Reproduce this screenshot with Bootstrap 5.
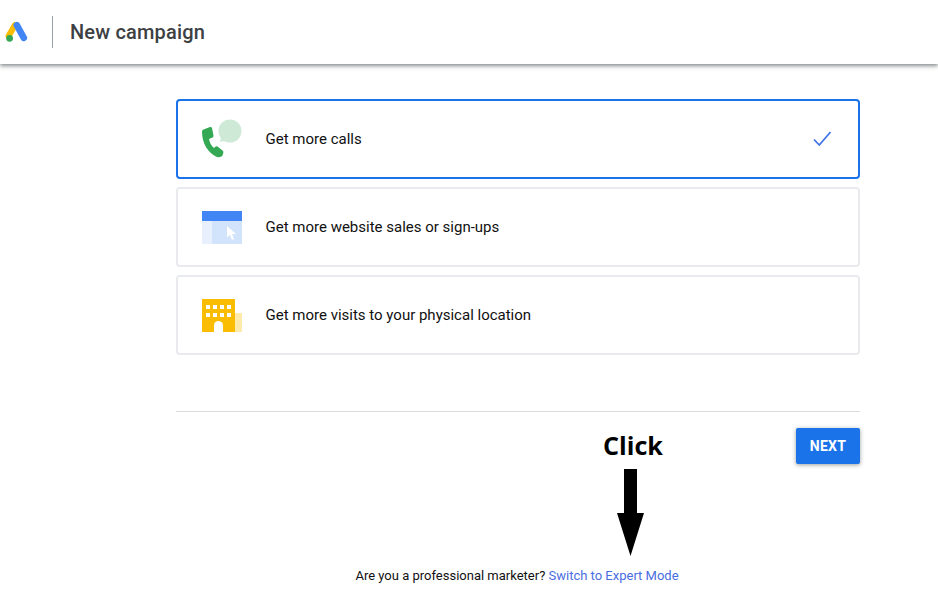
<!doctype html>
<html lang="en">
<head>
    <meta charset="UTF-8">
    <meta name="viewport" content="width=device-width, initial-scale=1.0">
    <link rel="stylesheet" href="https://cdn.jsdelivr.net/npm/bootstrap@5.3.2/dist/css/bootstrap.min.css">
    <title>New campaign</title>
    <style>
        body { font-family: Roboto, sans-serif; background: #fff; color: #111; overflow: hidden; }
        .top-bar { height: 64px; box-shadow: 0 2px 4px rgba(60, 64, 67, .6); }
        .top-logo { margin-left: 5px; width: 24px; height: 24px; }
        .top-sep { width: 1px; height: 32px; background: #9aa0a6; margin: 0 17px 0 23px; }
        .top-title { font-size: 20px; font-weight: 500; color: #3c4043; letter-spacing: .18px; }
        .goal-col { width: 684px; margin-left: 176px; padding-top: 35px; position: relative; }
        .goal-item { height: 80px; border: 2px solid #e8eaed; border-radius: 4px; padding: 0 26px 0 24px; margin-bottom: 8px; font-size: 15px; }
        .goal-item span { line-height: 22px; }
        .goal-item.picked { border-color: #1a73e8; }
        .goal-icon { width: 40px; height: 48px; margin-right: 23.5px; flex: none; }
        .goal-rule { border-top: 1px solid #dadce0; margin-top: 56px; }
        .next-btn { width: 64px; height: 36px; padding: 0; margin-top: 16px; background: #1a73e8; border: 0; border-radius: 2px; color: #fff; font-size: 14px; font-weight: 700; letter-spacing: .3px; box-shadow: 0 1px 4px rgba(60, 64, 67, .5); }
        .pro-line { margin-top: 104px; padding-right: 2px; font-size: 13px; color: #111; line-height: 16px; }
        .pro-line a { color: #4a6ee0; text-decoration: none; }
        .click-note { position: absolute; left: 427px; top: 363px; font-family: "Open Sans", sans-serif; font-weight: 700; font-size: 25.2px; line-height: 36px; color: #000; }
        .click-arrow { position: absolute; left: 441px; top: 405px; }
    </style>
</head>
<body>

<div class="top-bar d-flex align-items-center">
    <svg class="top-logo" viewBox="0 0 24 24">
        <path d="M9.800 5.200 3.600 16" stroke="#fbbc04" stroke-width="6" stroke-linecap="round"/>
        <path d="M11.800 5.200 18.800 17.800" stroke="#4285f4" stroke-width="6.600" stroke-linecap="round"/>
        <circle cx="4.600" cy="18.300" r="3.400" fill="#34a853"/>
    </svg>
    <div class="top-sep"></div>
    <div class="top-title">New campaign</div>
</div>

<div class="goal-col">
    <div class="goal-item picked d-flex align-items-center">
        <svg class="goal-icon" viewBox="0 0 40 48">
            <circle cx="28" cy="16" r="11.500" fill="#ceead6"/>
            <path d="M19.500 21 18 26.700 24 26z" fill="#ceead6"/>
            <path d="M8 12 1.500 14.500C.3 15 0 16 0 17 0 28 6 38 15 42 17 42.500 19.500 42 20.500 40.500L21.300 38C21.600 37 21.200 36 20.500 35.500L15.500 31.500C14.800 31 14 31 13.300 31.700L12 33C9 30.500 7.500 27 7 24L10.500 22.500C11.300 22.200 11.600 21.500 11.500 20.700L10 13C9.800 12.200 9 11.700 8 12z" fill="#34a853"/>
        </svg>
        <span class="flex-grow-1">Get more calls</span>
        <svg width="20" height="18" viewBox="0 0 20 18" fill="none">
            <path d="M2 9.500 7.300 15 18.500 2" stroke="#4273e8" stroke-width="1.800"/>
        </svg>
    </div>
    <div class="goal-item d-flex align-items-center">
        <svg class="goal-icon" viewBox="0 0 40 48">
            <rect y="18" width="10" height="23" fill="#e8f0fe"/>
            <rect x="10" y="18" width="30" height="23" fill="#d2e3fc"/>
            <rect y="8" width="40" height="10" fill="#4285f4"/>
            <path d="M25 23 25 34.500 27.800 32 30 37 32 36 30 31.300 34 31z" fill="#fff"/>
        </svg>
        <span class="flex-grow-1">Get more website sales or sign-ups</span>
    </div>
    <div class="goal-item d-flex align-items-center">
        <svg class="goal-icon" viewBox="0 0 40 48">
            <rect x="33" y="22" width="7" height="19" fill="#feeaab"/>
            <rect y="8" width="33" height="33" fill="#fbbc04"/>
            <g fill="#fff">
                <rect x="4" y="14" width="4" height="4"/><rect x="11" y="14" width="4" height="4"/><rect x="18" y="14" width="4" height="4"/><rect x="25" y="14" width="4" height="4"/>
                <rect x="4" y="22" width="4" height="4"/><rect x="11" y="22" width="4" height="4"/><rect x="18" y="22" width="4" height="4"/><rect x="25" y="22" width="4" height="4"/>
                <path d="M12 41V34.500a4.500 4.500 0 0 1 9 0V41z"/>
            </g>
        </svg>
        <span class="flex-grow-1">Get more visits to your physical location</span>
    </div>

    <div class="goal-rule"></div>
    <div class="d-flex justify-content-end">
        <button type="button" class="btn next-btn">NEXT</button>
    </div>
    <div class="pro-line text-center">Are you a professional marketer? <a href="#">Switch to Expert Mode</a></div>

    <div class="click-note">Click</div>
    <svg class="click-arrow" width="27" height="87" viewBox="0 0 27 87">
        <path d="M7 0H20V44H27L13.500 87 0 44H7z" fill="#000"/>
    </svg>
</div>

<script src="https://cdn.jsdelivr.net/npm/bootstrap@5.3.2/dist/js/bootstrap.bundle.min.js"></script>
</body>
</html>
